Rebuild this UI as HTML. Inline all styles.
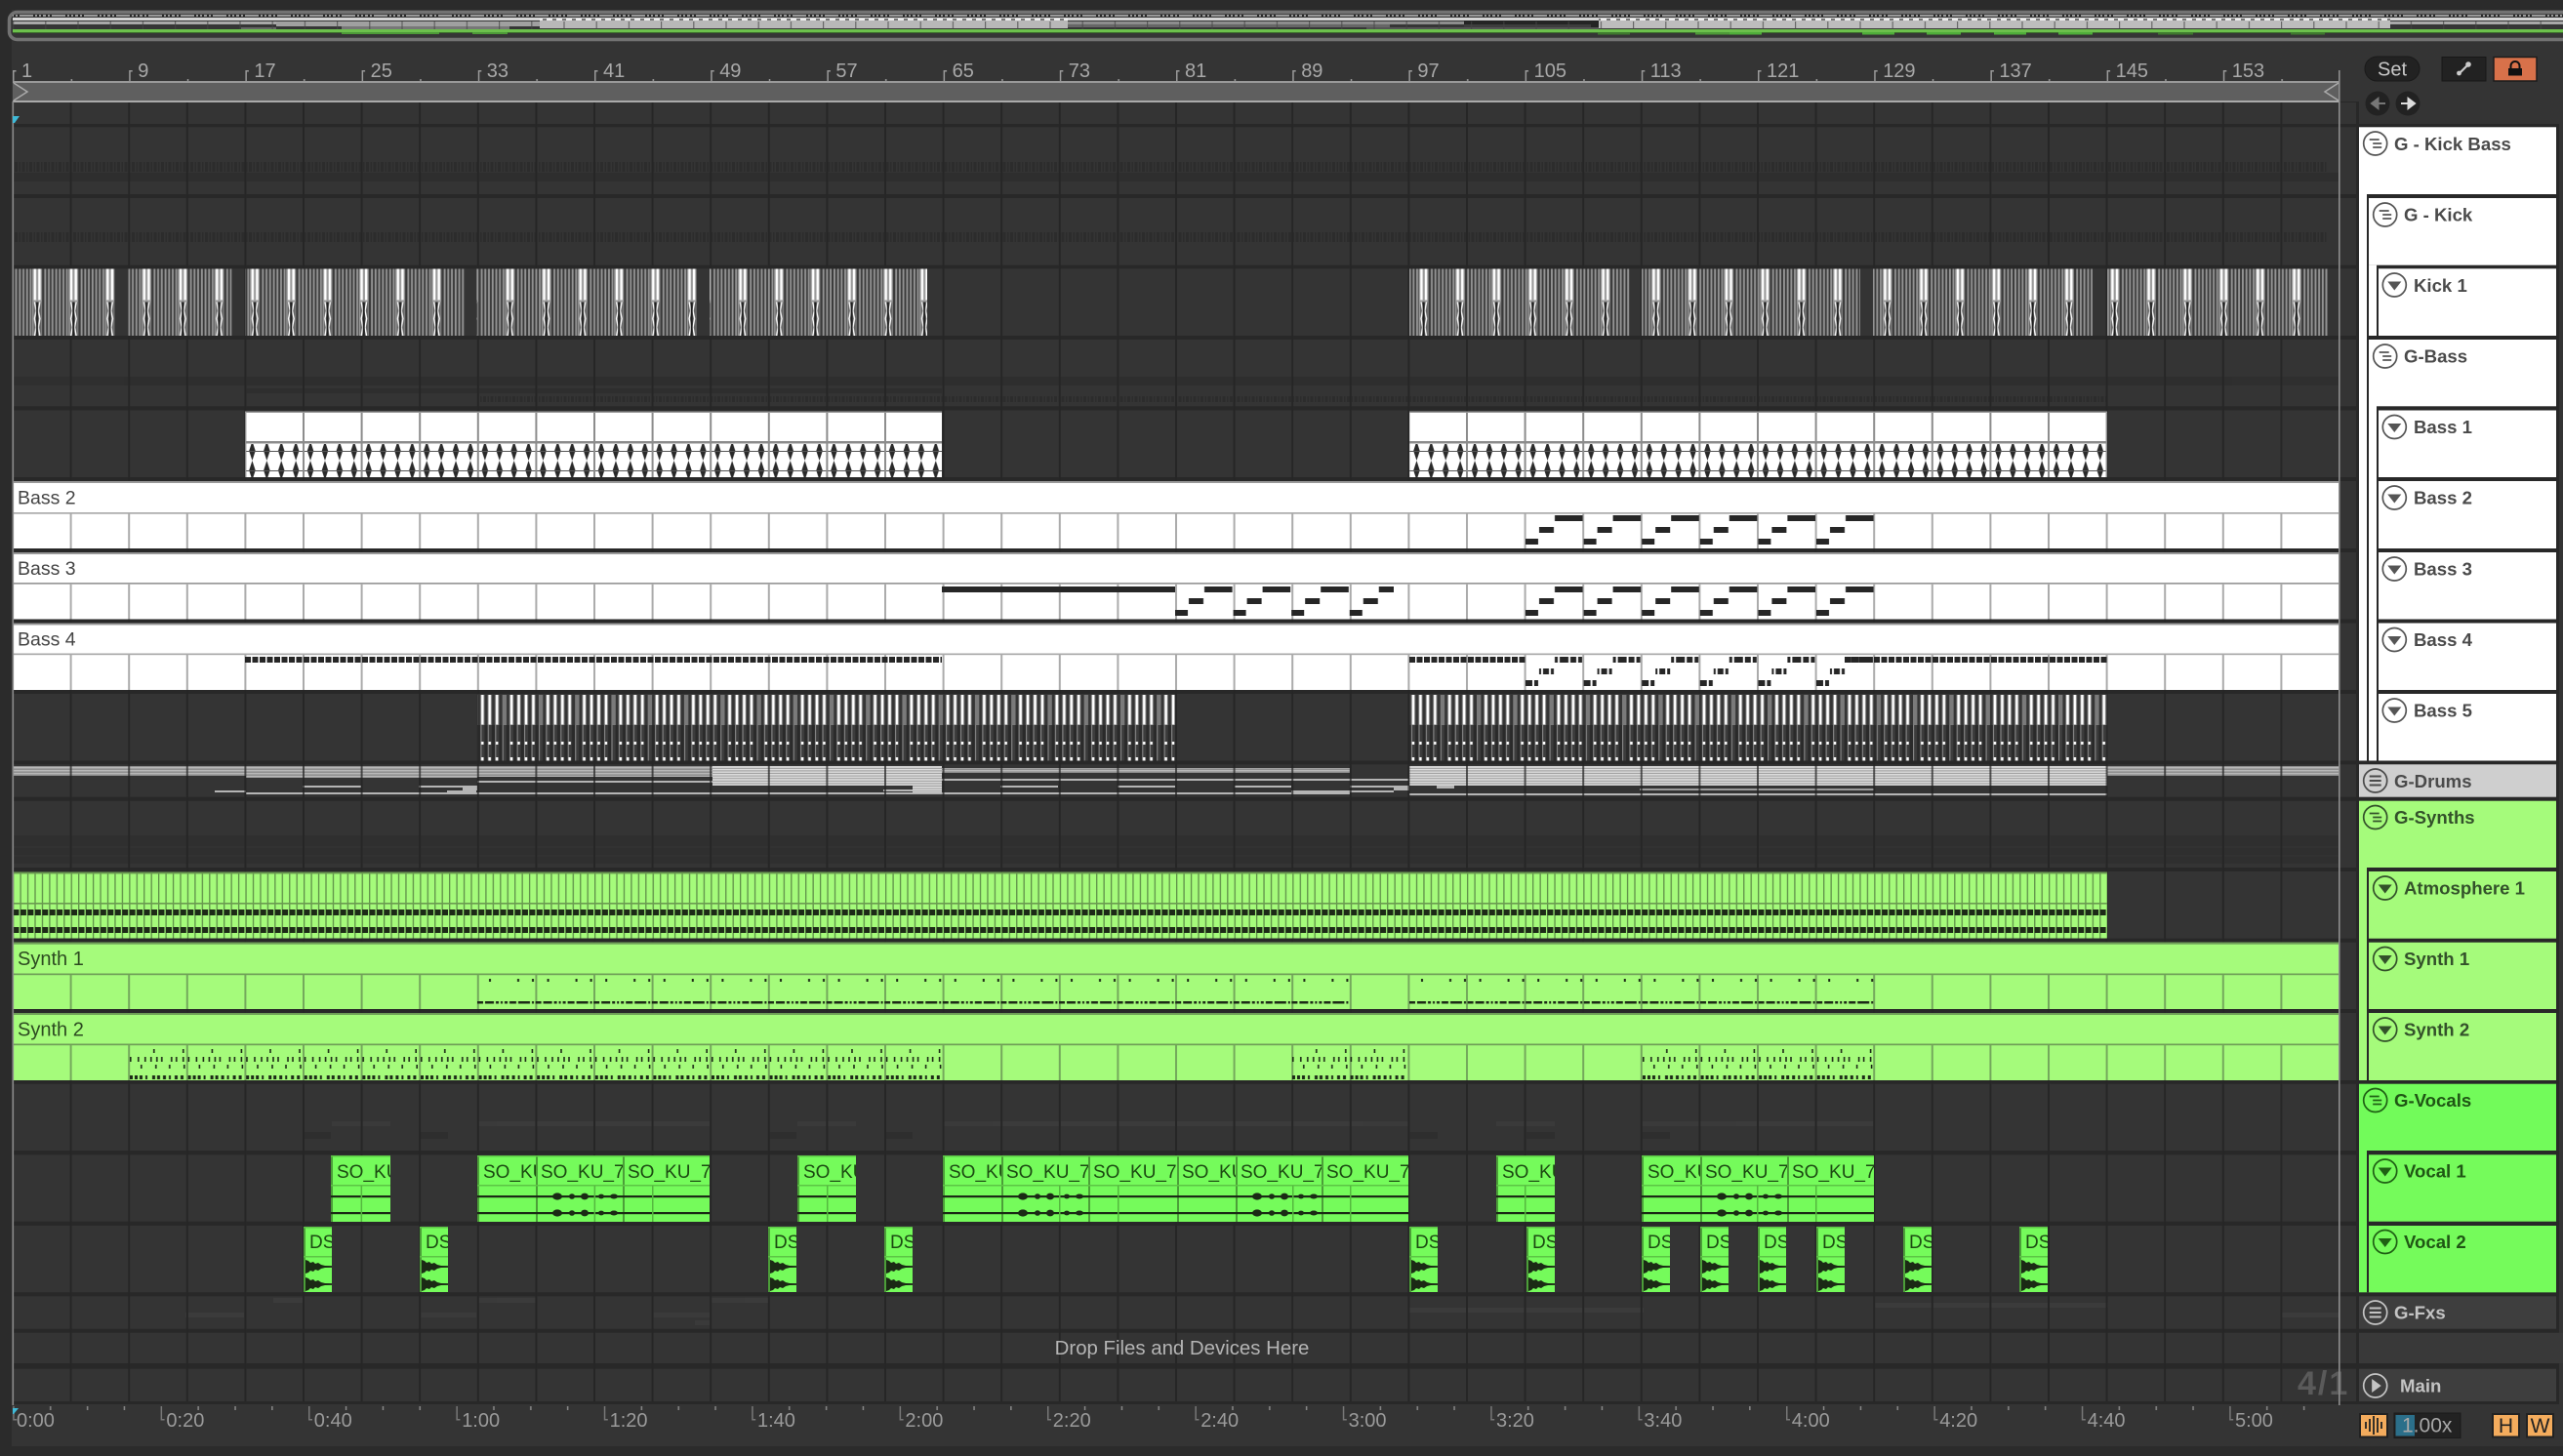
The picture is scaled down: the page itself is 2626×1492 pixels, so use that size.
<!DOCTYPE html>
<html lang="en"><head><meta charset="utf-8"><title>Arrangement</title>
<style>html,body{margin:0;padding:0;background:#333;width:2626px;height:1492px;overflow:hidden}svg{display:block}text{font-family:"Liberation Sans",sans-serif}</style></head>
<body>
<svg xmlns="http://www.w3.org/2000/svg" width="2626" height="1492" viewBox="0 0 2626 1492">
<defs>
<pattern id="gd" width="59.6" height="10" patternUnits="userSpaceOnUse" patternTransform="translate(12 0)"><rect width="2" height="10" fill="#262626"/></pattern>
<pattern id="gw" width="59.6" height="10" patternUnits="userSpaceOnUse" patternTransform="translate(12 0)"><rect width="2" height="10" fill="#ababab"/></pattern>
<pattern id="gm" width="59.6" height="10" patternUnits="userSpaceOnUse" patternTransform="translate(12 0)"><rect width="2" height="10" fill="#8c8c8c"/></pattern>
<pattern id="gg" width="59.6" height="10" patternUnits="userSpaceOnUse" patternTransform="translate(12 0)"><rect width="2" height="10" fill="#74a85c"/></pattern>
<pattern id="rt" width="119.2" height="90" patternUnits="userSpaceOnUse" patternTransform="translate(13 0)"><rect y="72" width="1.5" height="12" fill="#9a9a9a"/><rect y="72" width="3.5" height="1.5" fill="#9a9a9a"/><rect x="59.6" y="81" width="1.5" height="3" fill="#9a9a9a"/></pattern>
<pattern id="bt" width="151.4" height="1460" patternUnits="userSpaceOnUse" patternTransform="translate(13.2 0)"><rect y="1441" width="1.5" height="14" fill="#777"/><rect y="1454" width="4" height="1.5" fill="#777"/><rect x="37.8" y="1441" width="1.5" height="4" fill="#888"/><rect x="75.7" y="1441" width="1.5" height="4" fill="#888"/><rect x="113.5" y="1441" width="1.5" height="4" fill="#888"/></pattern>
<pattern id="kick" width="37.25" height="69" patternUnits="userSpaceOnUse">
<rect width="37.25" height="69" fill="#3a3a3a"/>
<rect x="0" width="1.9" height="69" fill="#939393"/><rect x="3.7" width="1.9" height="69" fill="#939393"/><rect x="7.4" width="1.9" height="69" fill="#939393"/><rect x="11" width="1.9" height="69" fill="#939393"/><rect x="26" width="1.9" height="69" fill="#939393"/><rect x="29.7" width="1.9" height="69" fill="#939393"/><rect x="33.4" width="1.9" height="69" fill="#939393"/>
<rect x="13.6" width="10" height="69" fill="#9a9a9a"/><rect x="15.2" width="2.4" height="32" fill="#fff"/><rect x="19.8" width="2.4" height="32" fill="#fff"/>
<rect x="15" y="34" width="8" height="35" fill="#666"/><path d="M16 34l1.6 9-1.6 8 1.6 9-1.6 9M21.5 34l-1.6 9 1.6 8-1.6 9 1.6 9" stroke="#fff" stroke-width="1.4" fill="none"/><path d="M18.6 34v35" stroke="#1e1e1e" stroke-width="2"/>
</pattern>
<pattern id="wave" width="14.9" height="34" patternUnits="userSpaceOnUse"><rect width="14.9" height="34" fill="#fff"/><path d="M7.45-3L10.7 7 7.45 17 4.2 7zM7.45 17L10.7 27 7.45 37 4.2 27z" fill="#2a2a2a"/><rect y="7" width="14.9" height="1" fill="#555"/><rect y="27" width="14.9" height="1" fill="#555"/></pattern>
<pattern id="b5" width="37.25" height="69" patternUnits="userSpaceOnUse">
<rect width="37.25" height="32" fill="#353535"/><rect y="32" width="37.25" height="37" fill="#2a2a2a"/>
<path d="M0 1h4.4v31H0zM7.2 1h4.5v31H7.2zM14.7 1h4.4v31h-4.4zM22.1 1h4.5v31h-4.5zM29.6 1h4.4v31h-4.4z" fill="#7a7a7a"/>
<path d="M8.2 1h2.5v30.5H8.2zM15.7 1h2.4v30.5h-2.4zM23.1 1h2.5v30.5h-2.5zM30.6 1h2.4v30.5h-2.4z" fill="#fff"/>
<path d="M0 32h1.3v37H0zM7.4 32h1.3v37H7.4zM14.9 32h1.3v37h-1.3zM22.3 32h1.3v37h-1.3zM29.8 32h1.3v37h-1.3z" fill="#858585"/>
<path d="M1.3 32h2.8v37H1.3zM8.7 32h2.8v37H8.7zM16.2 32h2.8v37h-2.8zM23.6 32h2.8v37h-2.8zM31.1 32h2.8v37h-2.8z" fill="#3c3c3c"/>
<path d="M8.2 49h2.5v3H8.2zM15.7 49h2.4v3h-2.4zM23.1 49h2.5v3h-2.5zM30.6 49h2.4v3h-2.4zM8.2 65h2.5v3.5H8.2zM15.7 65h2.4v3.5h-2.4zM23.1 65h2.5v3.5h-2.5zM30.6 65h2.4v3.5h-2.4z" fill="#fff"/>
</pattern>
<pattern id="atm" width="7.45" height="68" patternUnits="userSpaceOnUse"><rect width="7.45" height="68" fill="#a5fb7b"/><rect width="1.3" height="68" fill="#5f9049"/><rect x="0.5" y="38.5" width="6" height="6" fill="#1d2a17"/><rect x="0.5" y="56.5" width="6" height="6" fill="#1d2a17"/></pattern>
<pattern id="tri" width="59.6" height="30" patternUnits="userSpaceOnUse"><rect x="30" width="28.6" height="6" fill="#262626"/><rect x="14" y="12" width="15" height="6" fill="#262626"/><rect y="24" width="13" height="6" fill="#262626"/></pattern>
<pattern id="tri4" width="59.6" height="30" patternUnits="userSpaceOnUse"><path d="M30 0h3v6h-3zM35 0h9v6h-9zM46 0h6v6h-6zM54 0h4v6h-4zM14 12h2v6h-2zM18 12h6v6h-6zM26 12h3v6h-3zM0 24h7v6H0zM9 24h4v6H9z" fill="#262626"/></pattern>
<pattern id="dash" width="15" height="6" patternUnits="userSpaceOnUse"><rect width="6" height="6" fill="#262626"/><rect x="7.5" width="6" height="6" fill="#262626"/></pattern>
<pattern id="s1" width="59.6" height="26" patternUnits="userSpaceOnUse"><path d="M12 0h2v3h-2zM41 0h2v3h-2zM56 0h2v3h-2z" fill="#1c2a16"/><path d="M0 23h6v2.5H0zM8 23h9v2.5H8zM19 23h3v2.5h-3zM24 23h2v2.5h-2zM28 23h3v2.5h-3zM33 23h7v2.5h-7zM42 23h12v2.5H42zM56 23h2v2.5h-2z" fill="#1c2a16"/></pattern>
<pattern id="s2" width="59.6" height="32" patternUnits="userSpaceOnUse"><path d="M25 0h1.6v4H25zM55 0h1.6v4H55zM1 8h1.6v5H1zM9 8h1.6v5H9zM16 8h1.6v5H16zM22 8h1.6v5H22zM28 8h1.6v5H28zM33 8h1.6v5H33zM43 8h1.6v5H43zM48 8h1.6v5H48zM55 8h1.6v5H55zM12 16h1.6v4H12zM27 16h1.6v4H27zM41 16h1.6v4H41zM56 16h1.6v4H56z" fill="#1c2a16"/><path d="M1 27h3v4H1zM6 27h3v4H6zM11 27h3v4H11zM17 27h2v4h-2zM24 27h3v4h-3zM29 27h3v4h-3zM35 27h3v4h-3zM41 27h2v4h-2zM47 27h3v4h-3zM53 27h3v4h-3z" fill="#1c2a16"/></pattern>
<pattern id="st" width="10" height="3" patternUnits="userSpaceOnUse"><rect width="10" height="1.8" fill="#b8b8b8"/><rect y="1.8" width="10" height="1.2" fill="#8f8f8f"/></pattern>
<pattern id="stb" width="10" height="2.6" patternUnits="userSpaceOnUse"><rect width="10" height="1.7" fill="#dcdcdc"/><rect y="1.7" width="10" height=".9" fill="#9a9a9a"/></pattern>
<pattern id="faint" width="7.5" height="10" patternUnits="userSpaceOnUse"><rect width="3" height="10" fill="#2a2a2a"/><rect x="4.5" width="1.5" height="10" fill="#2a2a2a"/></pattern>
<pattern id="ovd" width="33" height="3" patternUnits="userSpaceOnUse"><path d="M1 0h2v2H1zM5 0h2v2H5zM9 0h2v2H9zM14 0h2v2h-2zM18 0h2v2h-2z" fill="#2a2a2a"/></pattern>
<pattern id="ovw" width="10" height="2" patternUnits="userSpaceOnUse"><rect width="6" height="2" fill="#eee"/><rect x="6" width="4" height="2" fill="#777"/></pattern>
<pattern id="ovt" width="33.2" height="8" patternUnits="userSpaceOnUse" patternTransform="translate(13 0)"><rect width="1.2" height="8" fill="#444" opacity=".7"/></pattern>

<g id="ig"><circle r="12" fill="none" stroke="currentColor" stroke-width="1.7"/><path d="M-6-4H4M-2.5 0H6.5M-2.5 4H6.5" stroke="currentColor" stroke-width="1.8" fill="none"/></g>
<g id="il"><circle r="12" fill="none" stroke="currentColor" stroke-width="1.7"/><path d="M-6-4.5H6M-6 0H6M-6 4.5H6" stroke="currentColor" stroke-width="2" fill="none"/></g>
<g id="it"><circle r="12" fill="none" stroke="currentColor" stroke-width="1.7"/><path d="M-7-3.5H7L0 5.5z" fill="currentColor"/></g>
<g id="ip"><circle r="12" fill="none" stroke="currentColor" stroke-width="1.7"/><path d="M-3.5-7L6 0-3.5 7z" fill="currentColor"/></g>

<g id="vc"><rect width="130" height="68" fill="#75fb5b"/><rect width="2" height="68" fill="#4c9e39"/><rect width="130" height="1.5" fill="#5cc545"/><rect y="30" width="130" height="1.5" fill="#5cc545"/><rect y="41" width="130" height="2.2" fill="#1b2a15"/><rect y="58" width="130" height="2.2" fill="#1b2a15"/></g>
<g id="vb"><use href="#vc"/><g fill="#1b2a15"><ellipse cx="22" cy="42" rx="5" ry="3.6"/><ellipse cx="37" cy="42" rx="3" ry="2.8"/><ellipse cx="50" cy="42" rx="4" ry="3.4"/><ellipse cx="67" cy="42" rx="3" ry="2.4"/><ellipse cx="80" cy="42" rx="4" ry="2.5"/><ellipse cx="22" cy="59" rx="5" ry="3.6"/><ellipse cx="37" cy="59" rx="3" ry="2.8"/><ellipse cx="50" cy="59" rx="4" ry="3.4"/><ellipse cx="67" cy="59" rx="3" ry="2.4"/><ellipse cx="80" cy="59" rx="4" ry="2.5"/></g></g>
<g id="ds"><rect width="40" height="67" fill="#75fb5b"/><rect width="2" height="67" fill="#4c9e39"/><rect width="40" height="1.5" fill="#5cc545"/><rect y="30" width="40" height="1.5" fill="#5cc545"/>
<path d="M2 34L5 35 7 37 10 36 12 38 15 37 18 39 22 40 30 40.2V41.8L22 42 18 43 15 45 12 44 10 46 7 45 5 47 2 48z" fill="#1b2a15"/><path d="M2 52L5 53 7 55 10 54 12 56 15 55 18 57 22 58 30 58.2V59.8L22 60 18 61 15 63 12 62 10 64 7 63 5 65 2 66z" fill="#1b2a15"/></g>
</defs>

<rect width="2626" height="1492" fill="#343434"/>
<rect width="2626" height="10" fill="#2b2b2b"/>
<rect y="0" width="12" height="1492" fill="#2b2b2b"/>
<rect y="1482" width="2626" height="10" fill="#2b2b2b"/>

<!-- overview -->
<rect x="9.5" y="12.5" width="2640" height="28" rx="8" fill="#353535" stroke="#727272" stroke-width="3.5"/>
<rect x="13" y="15" width="2613" height="2" fill="#999"/><rect x="13" y="15" width="2613" height="2" fill="url(#ovd)"/>
<rect x="13" y="18" width="2613" height="3" fill="#d4d4d4"/>
<rect x="13" y="22" width="270" height="3" fill="#a8a8a8"/><rect x="2449" y="22" width="177" height="3" fill="#a8a8a8"/>
<rect x="283" y="22" width="270" height="5" fill="#a0a0a0"/>
<rect x="553" y="19" width="541" height="2" fill="url(#ovw)"/><rect x="553" y="21" width="541" height="8" fill="#b8b8b8"/>
<rect x="1094" y="22" width="544" height="3" fill="#8d8d8d"/><rect x="1094" y="25" width="330" height="3" fill="#666"/>
<rect x="1500" y="21" width="138" height="8" fill="#242424"/><rect x="1500" y="25" width="130" height="3" fill="#3d3d3d"/>
<rect x="1638" y="19" width="811" height="2" fill="url(#ovw)"/><rect x="1638" y="21" width="811" height="8" fill="#bdbdbd"/>
<rect x="350" y="27" width="172" height="3" fill="#777"/><rect x="247" y="28" width="36" height="2" fill="#666"/>
<rect x="1400" y="28" width="238" height="2" fill="#555"/>
<rect x="13" y="22" width="2613" height="8" fill="url(#ovt)"/>
<rect x="13" y="30" width="2613" height="3" fill="#6cc04c"/><rect x="13" y="33" width="2613" height="1" fill="#3c6a2c"/>
<g fill="#4d9a38"><rect x="350" y="33" width="34" height="2"/><rect x="384" y="33" width="66" height="2"/><rect x="484" y="33" width="36" height="2"/><rect x="1637" y="33" width="33" height="2.5" fill="#3f7a2e"/><rect x="1737" y="33" width="68" height="2.5"/><rect x="1772" y="33" width="33" height="2.5" fill="#4fae3a"/><rect x="1908" y="33" width="33" height="2.5" fill="#4fae3a"/><rect x="1974" y="33" width="35" height="2.5" fill="#4fae3a"/><rect x="2043" y="33" width="33" height="2.5" fill="#4fae3a"/><rect x="2109" y="33" width="35" height="2.5" fill="#4fae3a"/><rect x="2211" y="33" width="36" height="2.5" fill="#3f7a2e"/><rect x="2347" y="33" width="35" height="2.5" fill="#3f7a2e"/></g>

<!-- ruler -->
<rect x="13" y="70" width="2384" height="14" fill="url(#rt)"/>
<g font-size="20" fill="#a8a8a8">
<text x="22" y="79">1</text><text x="141.2" y="79">9</text><text x="260.4" y="79">17</text><text x="379.6" y="79">25</text><text x="498.8" y="79">33</text><text x="618" y="79">41</text><text x="737.2" y="79">49</text><text x="856.4" y="79">57</text><text x="975.6" y="79">65</text><text x="1094.8" y="79">73</text><text x="1214" y="79">81</text><text x="1333.2" y="79">89</text><text x="1452.4" y="79">97</text><text x="1571.6" y="79">105</text><text x="1690.8" y="79">113</text><text x="1810" y="79">121</text><text x="1929.2" y="79">129</text><text x="2048.4" y="79">137</text><text x="2167.6" y="79">145</text><text x="2286.8" y="79">153</text>
</g>

<!-- arrangement bg -->
<rect x="13" y="104" width="2404" height="1335" fill="#282828"/>
<g fill="#343434">
<rect x="13" y="105" width="2401" height="22"/><rect x="13" y="130.3" width="2401" height="68.7"/><rect x="13" y="203" width="2401" height="68.7"/><rect x="13" y="275.3" width="2401" height="68.7"/><rect x="13" y="348" width="2401" height="68.3"/><rect x="13" y="420.5" width="2401" height="68.5"/><rect x="13" y="493" width="2401" height="69"/><rect x="13" y="566" width="2401" height="68.5"/><rect x="13" y="638.5" width="2401" height="68.5"/><rect x="13" y="711" width="2401" height="68.5"/><rect x="13" y="783.3" width="2401" height="33.4"/><rect x="13" y="820.7" width="2401" height="68.3"/><rect x="13" y="893" width="2401" height="68.7"/><rect x="13" y="965.7" width="2401" height="68.3"/><rect x="13" y="1038" width="2401" height="69"/><rect x="13" y="1110.7" width="2401" height="68.3"/><rect x="13" y="1183.3" width="2401" height="68.4"/><rect x="13" y="1256" width="2401" height="68.3"/><rect x="13" y="1328.3" width="2401" height="33.4"/><rect x="13" y="1365.7" width="2401" height="31.3"/><rect x="13" y="1402.7" width="2401" height="33.3"/>
</g>
<!-- faint group previews -->
<g opacity=".75">
<rect x="15" y="166" width="2370" height="10" fill="url(#faint)"/><rect x="13" y="177" width="2384" height="9" fill="#2d2d2d"/>
<rect x="15" y="238" width="2370" height="10" fill="url(#faint)"/>
<rect x="13" y="386" width="2384" height="9" fill="#2d2d2d"/><rect x="251" y="398" width="714" height="5" fill="#2c2c2c"/><rect x="489" y="406" width="1670" height="6" fill="url(#faint)"/>
<rect x="13" y="856" width="2384" height="29" fill="#2e2e2e"/><rect x="13" y="867" width="2384" height="2" fill="#323232"/><rect x="13" y="876" width="2384" height="2" fill="#323232"/>
<rect x="311" y="1160" width="28" height="7" fill="#2d2d2d"/><rect x="430" y="1160" width="29" height="7" fill="#2d2d2d"/><rect x="787" y="1160" width="29" height="7" fill="#2d2d2d"/><rect x="906" y="1160" width="29" height="7" fill="#2d2d2d"/><rect x="1444" y="1160" width="29" height="7" fill="#2d2d2d"/><rect x="1564" y="1160" width="29" height="7" fill="#2d2d2d"/><rect x="1682" y="1160" width="29" height="7" fill="#2d2d2d"/>
<rect x="340" y="1149" width="60" height="5" fill="#3d3d3d"/><rect x="489" y="1149" width="238" height="5" fill="#3d3d3d"/><rect x="817" y="1149" width="60" height="5" fill="#3d3d3d"/><rect x="966" y="1149" width="477" height="5" fill="#3d3d3d"/><rect x="1533" y="1149" width="60" height="5" fill="#3d3d3d"/><rect x="1682" y="1149" width="238" height="5" fill="#3d3d3d"/>
<rect x="280" y="1330" width="30" height="5" fill="#3d3d3d"/><rect x="490" y="1330" width="60" height="5" fill="#3d3d3d"/><rect x="728" y="1330" width="59" height="5" fill="#3d3d3d"/><rect x="430" y="1345" width="58" height="5" fill="#3d3d3d"/><rect x="668" y="1345" width="60" height="5" fill="#3d3d3d"/><rect x="712" y="1353" width="16" height="5" fill="#3d3d3d"/><rect x="190" y="1345" width="60" height="5" fill="#3d3d3d"/><rect x="2337" y="1345" width="60" height="5" fill="#3d3d3d"/><rect x="1444" y="1340" width="240" height="5" fill="#3d3d3d"/><rect x="1920" y="1335" width="240" height="5" fill="#3d3d3d"/>
</g>
<rect x="14" y="105" width="2383" height="1331" fill="url(#gd)"/>

<!-- loop bar -->
<rect x="13" y="84" width="2384" height="20" fill="#5f5f5f"/><rect x="13" y="83" width="2384" height="2" fill="#999"/><rect x="13" y="103" width="2384" height="2" fill="#aaa"/>
<path d="M14 85L28 94 14 103" fill="none" stroke="#aaa" stroke-width="1.5"/><path d="M2396 85L2382 94 2396 103" fill="none" stroke="#aaa" stroke-width="1.5"/>

<!-- Kick 1 -->
<rect transform="translate(19.4 275.5)" x="-6" width="104" height="68.5" fill="url(#kick)"/>
<rect transform="translate(131.4 275.5)" x="0" width="106" height="68.5" fill="url(#kick)"/>
<rect transform="translate(242.4 275.5)" x="9" width="225" height="68.5" fill="url(#kick)"/>
<rect transform="translate(466.6 275.5)" x="22" width="225" height="68.5" fill="url(#kick)"/>
<rect transform="translate(705 275.5)" x="22" width="223" height="68.5" fill="url(#kick)"/>
<rect transform="translate(1440 275.5)" x="4" width="226" height="68.5" fill="url(#kick)"/>
<rect transform="translate(1678 275.5)" x="4" width="224" height="68.5" fill="url(#kick)"/>
<rect transform="translate(1915 275.5)" x="4" width="225" height="68.5" fill="url(#kick)"/>
<rect transform="translate(2148 275.5)" x="11" width="226" height="68.5" fill="url(#kick)"/>

<!-- Bass 1 clips -->
<rect x="251" y="421.5" width="714" height="67.5" fill="#fff"/><rect x="1444" y="421.5" width="715" height="67.5" fill="#fff"/>
<rect transform="translate(251 455)" width="714" height="34" fill="url(#wave)"/><rect transform="translate(1444 455)" width="715" height="34" fill="url(#wave)"/>
<rect x="251" y="421.5" width="714" height="67.5" fill="url(#gm)"/><rect x="1444" y="421.5" width="715" height="67.5" fill="url(#gm)"/>
<rect x="251" y="421.5" width="714" height="1.5" fill="#999"/><rect x="1444" y="421.5" width="715" height="1.5" fill="#999"/>
<rect x="251" y="452" width="714" height="2.5" fill="#8c8c8c"/><rect x="1444" y="452" width="715" height="2.5" fill="#8c8c8c"/>

<!-- Bass 2-4 -->
<g>
<rect x="13" y="493" width="2384" height="69" fill="#fff"/><rect x="13" y="493" width="2384" height="2" fill="#999"/><rect x="13" y="525" width="2384" height="1.7" fill="#aaa"/><rect x="14" y="526" width="2383" height="36" fill="url(#gw)"/>
<rect x="13" y="566" width="2384" height="68.5" fill="#fff"/><rect x="13" y="566" width="2384" height="2" fill="#999"/><rect x="13" y="597" width="2384" height="1.7" fill="#999"/><rect x="14" y="598" width="2383" height="36.5" fill="url(#gw)"/>
<rect x="13" y="638.5" width="2384" height="68.5" fill="#fff"/><rect x="13" y="638.5" width="2384" height="2" fill="#999"/><rect x="13" y="669.5" width="2384" height="1.7" fill="#aaa"/><rect x="14" y="671" width="2383" height="36" fill="url(#gw)"/>
</g>
<text x="18" y="516.5" font-size="19.5" fill="#444">Bass 2</text>
<text x="18" y="589" font-size="19.5" fill="#444">Bass 3</text>
<text x="18" y="661.5" font-size="19.5" fill="#444">Bass 4</text>
<rect transform="translate(1563 528)" width="357" height="30" fill="url(#tri)"/>
<rect transform="translate(1563 601)" width="357" height="30" fill="url(#tri)"/>
<rect x="965" y="601" width="239" height="6" fill="#262626"/><rect transform="translate(1204 601)" width="224" height="30" fill="url(#tri)"/>
<rect transform="translate(251 673)" width="714" height="6" fill="url(#dash)"/>
<rect transform="translate(1444 673)" width="119" height="6" fill="url(#dash)"/>
<rect transform="translate(1890 673)" width="269" height="6" fill="url(#dash)"/>
<rect transform="translate(1563 673)" width="357" height="30" fill="url(#tri4)"/>

<!-- Bass 5 -->
<rect transform="translate(477.4 711)" x="11.6" width="715" height="68.5" fill="url(#b5)"/>
<rect transform="translate(1438.5 711)" x="5.5" width="715" height="68.5" fill="url(#b5)"/>

<!-- G-Drums -->
<rect x="13" y="785" width="239" height="10" fill="url(#st)"/>
<rect x="252" y="785" width="237" height="12" fill="url(#st)"/>
<rect x="489" y="785" width="241" height="11" fill="url(#st)"/>
<rect x="730" y="785" width="235" height="20" fill="url(#stb)"/>
<rect x="935" y="805" width="30" height="7" fill="url(#stb)"/>
<rect x="965" y="787" width="418" height="5" fill="url(#st)"/>
<rect x="1444" y="785" width="715" height="20" fill="url(#stb)"/>
<rect x="2159" y="785" width="238" height="10" fill="url(#st)"/>
<g fill="#b5b5b5">
<rect x="220" y="810" width="32" height="2"/><rect x="252" y="812" width="237" height="2"/><rect x="310" y="805" width="60" height="2"/><rect x="429" y="805" width="60" height="2"/><rect x="458" y="810" width="30" height="2"/><rect x="474" y="807" width="15" height="3"/>
<rect x="489" y="800" width="241" height="2"/><rect x="489" y="812" width="476" height="2"/><rect x="905" y="809" width="30" height="2"/>
<rect x="965" y="798" width="478" height="2"/><rect x="965" y="812" width="358" height="2"/><rect x="1025" y="805" width="59" height="2"/><rect x="1145" y="805" width="59" height="2"/><rect x="1265" y="805" width="58" height="2"/><rect x="1323" y="810" width="60" height="4"/><rect x="1383" y="805" width="61" height="2"/><rect x="1383" y="810" width="45" height="2"/><rect x="1428" y="807" width="16" height="3"/>
<rect x="1444" y="813" width="715" height="2"/><rect x="1472" y="805" width="18" height="3"/><rect x="1680" y="808" width="240" height="2" opacity=".8"/>
</g>
<rect x="14" y="785" width="2383" height="30" fill="url(#gd)" opacity=".75"/>

<!-- Atmosphere -->
<rect transform="translate(13 893.5)" width="2146" height="68" fill="url(#atm)"/>
<rect x="13" y="893.5" width="2146" height="2" fill="#6a9a50"/><rect x="13" y="925" width="2146" height="1.6" fill="#6a9a50"/>

<!-- Synth 1/2 -->
<rect x="13" y="965.7" width="2384" height="68.3" fill="#a5fb7b"/><rect x="13" y="965.7" width="2384" height="2" fill="#6f9f57"/><rect x="13" y="997.5" width="2384" height="1.7" fill="#6f9f57"/><rect x="14" y="999" width="2383" height="35" fill="url(#gg)"/>
<rect x="13" y="1038" width="2384" height="69" fill="#a5fb7b"/><rect x="13" y="1038" width="2384" height="2" fill="#6f9f57"/><rect x="13" y="1069.5" width="2384" height="1.7" fill="#6f9f57"/><rect x="14" y="1071" width="2383" height="36" fill="url(#gg)"/>
<text x="18" y="989" font-size="20" fill="#2c4a20">Synth 1</text>
<text x="18" y="1061.5" font-size="20" fill="#2c4a20">Synth 2</text>
<rect transform="translate(489 1003)" width="894" height="26" fill="url(#s1)"/>
<rect transform="translate(1444 1003)" width="476" height="26" fill="url(#s1)"/>
<rect transform="translate(132 1075)" width="833" height="32" fill="url(#s2)"/>
<rect transform="translate(1323 1075)" width="120" height="32" fill="url(#s2)"/>
<rect transform="translate(1682 1075)" width="238" height="32" fill="url(#s2)"/>

<!-- Vocal 1 clips -->
<svg x="339" y="1184" width="61" height="68"><use href="#vc"/><text x="6" y="23" font-size="19" fill="#1c4a12">SO_KU_7</text></svg>
<svg x="489" y="1184" width="60" height="68"><use href="#vc"/><text x="6" y="23" font-size="19" fill="#1c4a12">SO_KU_7</text></svg>
<svg x="549" y="1184" width="89" height="68"><use href="#vb"/><text x="5" y="23" font-size="19" fill="#1c4a12">SO_KU_7</text></svg>
<svg x="638" y="1184" width="89" height="68"><use href="#vc"/><text x="5" y="23" font-size="19" fill="#1c4a12">SO_KU_7</text></svg>
<svg x="817" y="1184" width="60" height="68"><use href="#vc"/><text x="6" y="23" font-size="19" fill="#1c4a12">SO_KU_7</text></svg>
<svg x="966" y="1184" width="60" height="68"><use href="#vc"/><text x="6" y="23" font-size="19" fill="#1c4a12">SO_KU_7</text></svg>
<svg x="1026" y="1184" width="89" height="68"><use href="#vb"/><text x="5" y="23" font-size="19" fill="#1c4a12">SO_KU_7</text></svg>
<svg x="1115" y="1184" width="91" height="68"><use href="#vc"/><text x="5" y="23" font-size="19" fill="#1c4a12">SO_KU_7</text></svg>
<svg x="1206" y="1184" width="60" height="68"><use href="#vc"/><text x="5" y="23" font-size="19" fill="#1c4a12">SO_KU_7</text></svg>
<svg x="1266" y="1184" width="88" height="68"><use href="#vb"/><text x="5" y="23" font-size="19" fill="#1c4a12">SO_KU_7</text></svg>
<svg x="1354" y="1184" width="89" height="68"><use href="#vc"/><text x="5" y="23" font-size="19" fill="#1c4a12">SO_KU_7</text></svg>
<svg x="1533" y="1184" width="60" height="68"><use href="#vc"/><text x="6" y="23" font-size="19" fill="#1c4a12">SO_KU_7</text></svg>
<svg x="1682" y="1184" width="60" height="68"><use href="#vc"/><text x="6" y="23" font-size="19" fill="#1c4a12">SO_KU_7</text></svg>
<svg x="1742" y="1184" width="89" height="68"><use href="#vb"/><text x="5" y="23" font-size="19" fill="#1c4a12">SO_KU_7</text></svg>
<svg x="1831" y="1184" width="89" height="68"><use href="#vc"/><text x="5" y="23" font-size="19" fill="#1c4a12">SO_KU_7</text></svg>
<g fill="#55b83f"><rect x="369.6" y="1215" width="1.5" height="37"/><rect x="608.6" y="1215" width="1.5" height="37"/><rect x="668" y="1215" width="1.5" height="37"/><rect x="847" y="1215" width="1.5" height="37"/><rect x="1085" y="1215" width="1.5" height="37"/><rect x="1145" y="1215" width="1.5" height="37"/><rect x="1324" y="1215" width="1.5" height="37"/><rect x="1383" y="1215" width="1.5" height="37"/><rect x="1562" y="1215" width="1.5" height="37"/><rect x="1800" y="1215" width="1.5" height="37"/><rect x="1860" y="1215" width="1.5" height="37"/></g>

<!-- Vocal 2 clips -->
<svg x="311" y="1257" width="29" height="67"><use href="#ds"/><text x="6" y="22" font-size="19" fill="#1c4a12">DS</text></svg>
<svg x="430" y="1257" width="29" height="67"><use href="#ds"/><text x="6" y="22" font-size="19" fill="#1c4a12">DS</text></svg>
<svg x="787" y="1257" width="29" height="67"><use href="#ds"/><text x="6" y="22" font-size="19" fill="#1c4a12">DS</text></svg>
<svg x="906" y="1257" width="29" height="67"><use href="#ds"/><text x="6" y="22" font-size="19" fill="#1c4a12">DS</text></svg>
<svg x="1444" y="1257" width="29" height="67"><use href="#ds"/><text x="6" y="22" font-size="19" fill="#1c4a12">DS</text></svg>
<svg x="1564" y="1257" width="29" height="67"><use href="#ds"/><text x="6" y="22" font-size="19" fill="#1c4a12">DS</text></svg>
<svg x="1682" y="1257" width="29" height="67"><use href="#ds"/><text x="6" y="22" font-size="19" fill="#1c4a12">DS</text></svg>
<svg x="1742" y="1257" width="29" height="67"><use href="#ds"/><text x="6" y="22" font-size="19" fill="#1c4a12">DS</text></svg>
<svg x="1801" y="1257" width="29" height="67"><use href="#ds"/><text x="6" y="22" font-size="19" fill="#1c4a12">DS</text></svg>
<svg x="1861" y="1257" width="29" height="67"><use href="#ds"/><text x="6" y="22" font-size="19" fill="#1c4a12">DS</text></svg>
<svg x="1950" y="1257" width="29" height="67"><use href="#ds"/><text x="6" y="22" font-size="19" fill="#1c4a12">DS</text></svg>
<svg x="2069" y="1257" width="29" height="67"><use href="#ds"/><text x="6" y="22" font-size="19" fill="#1c4a12">DS</text></svg>

<text x="1211" y="1388" font-size="20.4" fill="#b4b4b4" text-anchor="middle">Drop Files and Devices Here</text>

<!-- bottom ruler -->
<rect x="0" y="1439" width="2417" height="43" fill="#343434"/><rect y="1439" width="12" height="43" fill="#2b2b2b"/>
<rect x="13" y="1440" width="2384" height="20" fill="url(#bt)"/>
<g font-size="20" fill="#9a9a9a">
<text x="17" y="1462">0:00</text><text x="170.4" y="1462">0:20</text><text x="321.8" y="1462">0:40</text><text x="473.2" y="1462">1:00</text><text x="624.6" y="1462">1:20</text><text x="776" y="1462">1:40</text><text x="927.4" y="1462">2:00</text><text x="1078.8" y="1462">2:20</text><text x="1230.2" y="1462">2:40</text><text x="1381.6" y="1462">3:00</text><text x="1533" y="1462">3:20</text><text x="1684.4" y="1462">3:40</text><text x="1835.8" y="1462">4:00</text><text x="1987.2" y="1462">4:20</text><text x="2138.6" y="1462">4:40</text><text x="2290" y="1462">5:00</text>
</g>

<text x="2354" y="1429" font-size="34" font-weight="bold" letter-spacing="2" fill="#5a5a5a">4/1</text>
<rect x="12.5" y="104" width="1.6" height="1336" fill="#8a8a8a"/><rect x="2396" y="72" width="1.6" height="1368" fill="#8e8e8e"/>
<path d="M13 119H20L15 126H13z" fill="#3fbad8"/>
<path d="M13 1443H19L14 1449H13z" fill="#3fbad8"/>

<!-- right panel -->
<rect x="2414" y="127" width="212" height="1312" fill="#282828"/>
<rect x="2622" y="127" width="4" height="1312" fill="#343434"/>

<!-- white group -->
<rect x="2417" y="130.3" width="202" height="649.2" fill="#fff"/>
<rect x="2425" y="199" width="194" height="580.5" fill="#282828"/>
<rect x="2427" y="203" width="192" height="68.7" fill="#fff"/>
<rect x="2427" y="271.7" width="8" height="72.3" fill="#fff"/>
<rect x="2437" y="275.3" width="182" height="68.7" fill="#fff"/>
<rect x="2427" y="348" width="192" height="431.5" fill="#fff"/>
<rect x="2435" y="416.3" width="184" height="363.2" fill="#282828"/>
<rect x="2437" y="420.5" width="182" height="68.5" fill="#fff"/>
<rect x="2437" y="493" width="182" height="69" fill="#fff"/>
<rect x="2437" y="566" width="182" height="68.5" fill="#fff"/>
<rect x="2437" y="638.5" width="182" height="68.5" fill="#fff"/>
<rect x="2437" y="711" width="182" height="68.5" fill="#fff"/>

<rect x="2417" y="783.3" width="202" height="33.4" fill="#cfcfcf"/>

<!-- synth group -->
<rect x="2417" y="820.7" width="202" height="286.3" fill="#a5fb7b"/>
<rect x="2425" y="889" width="194" height="218" fill="#282828"/>
<rect x="2427" y="893" width="192" height="68.7" fill="#a5fb7b"/>
<rect x="2427" y="965.7" width="192" height="68.3" fill="#a5fb7b"/>
<rect x="2427" y="1038" width="192" height="69" fill="#a5fb7b"/>

<!-- vocal group -->
<rect x="2417" y="1110.7" width="202" height="213.6" fill="#72fb5a"/>
<rect x="2425" y="1179" width="194" height="145.3" fill="#282828"/>
<rect x="2427" y="1183.3" width="192" height="68.4" fill="#75fb5b"/>
<rect x="2427" y="1256" width="192" height="68.3" fill="#75fb5b"/>

<rect x="2417" y="1328.3" width="202" height="33.4" fill="#3e3e3e"/>
<rect x="2417" y="1365.7" width="209" height="31.3" fill="#393939"/>
<rect x="2417" y="1402.7" width="202" height="33.3" fill="#3e3e3e"/>

<g style="color:#555"><use href="#ig" x="2433.7" y="147"/><use href="#ig" x="2443.7" y="220"/><use href="#it" x="2453.3" y="292"/><use href="#ig" x="2443.7" y="365"/><use href="#it" x="2453.3" y="437.5"/><use href="#it" x="2453.3" y="510"/><use href="#it" x="2453.3" y="583"/><use href="#it" x="2453.3" y="655.5"/><use href="#it" x="2453.3" y="728"/></g>
<g style="color:#4a4a4a"><use href="#il" x="2433.7" y="800"/></g>
<g style="color:#33512a"><use href="#ig" x="2433.7" y="837.5"/><use href="#it" x="2443.7" y="910"/><use href="#it" x="2443.7" y="982.5"/><use href="#it" x="2443.7" y="1055"/></g>
<g style="color:#1f6014"><use href="#ig" x="2433.7" y="1127.5"/><use href="#it" x="2443.7" y="1200"/><use href="#it" x="2443.7" y="1272.5"/></g>
<g style="color:#c4c4c4"><use href="#il" x="2433.7" y="1345"/><use href="#ip" x="2433.7" y="1420"/></g>

<g font-size="18.6" font-weight="bold">
<g fill="#4a4a4a">
<text x="2453" y="154">G - Kick Bass</text><text x="2463" y="226.5">G - Kick</text><text x="2473" y="299">Kick 1</text><text x="2463" y="371.5">G-Bass</text><text x="2473" y="444">Bass 1</text><text x="2473" y="516.5">Bass 2</text><text x="2473" y="589.5">Bass 3</text><text x="2473" y="662">Bass 4</text><text x="2473" y="734.5">Bass 5</text><text x="2453" y="807">G-Drums</text>
</g>
<g fill="#33512a">
<text x="2453" y="844">G-Synths</text><text x="2463" y="916.5">Atmosphere 1</text><text x="2463" y="989">Synth 1</text><text x="2463" y="1061.5">Synth 2</text>
</g>
<g fill="#1f5614">
<text x="2453" y="1134">G-Vocals</text><text x="2463" y="1206.5">Vocal 1</text><text x="2463" y="1279">Vocal 2</text>
</g>
<g fill="#c4c4c4"><text x="2453" y="1351.5">G-Fxs</text><text x="2459" y="1426.5">Main</text></g>
</g>

<!-- top right controls -->
<rect x="2423" y="58" width="56" height="25" rx="12.5" fill="#222" stroke="#1a1a1a"/>
<text x="2451" y="77.5" font-size="20" fill="#c8c8c8" text-anchor="middle">Set</text>
<rect x="2502" y="58.5" width="45" height="24.5" fill="#222" stroke="#171717"/>
<path d="M2520 75L2529 66" stroke="#ccc" stroke-width="2.2"/><circle cx="2519.5" cy="75" r="2.4" fill="#ccc"/><circle cx="2529" cy="66" r="2.8" fill="#ccc"/>
<rect x="2555" y="58.5" width="44" height="24.5" fill="#d8714a" stroke="#1c1c1c" stroke-width="1.5"/>
<rect x="2570" y="70" width="14" height="7.5" fill="#111"/><path d="M2572.5 70v-2.5a4.5 4.5 0 0 1 9 0V70" fill="none" stroke="#111" stroke-width="2"/>
<circle cx="2436" cy="106" r="12.5" fill="#222"/><path d="M2444 106H2433M2436.5 101L2430 106 2436.5 111z" stroke="#777" stroke-width="2" fill="#777"/>
<circle cx="2467" cy="106" r="12.5" fill="#222"/><path d="M2460 106H2471M2467.5 101L2474 106 2467.5 111z" stroke="#ddd" stroke-width="2" fill="#ddd"/>

<!-- bottom right controls -->
<rect x="2417" y="1448" width="30" height="25.5" fill="#222"/><rect x="2419" y="1450" width="26" height="21.5" fill="#f4ac5d"/>
<path d="M2424 1457v7M2428 1454v13M2432 1451v19M2436 1453v15M2440 1457v7" stroke="#222" stroke-width="1.8"/>
<rect x="2453" y="1448" width="68" height="25.5" fill="#222" stroke="#1a1a1a"/><rect x="2454.5" y="1450" width="19.5" height="21.5" fill="#2b6f8a"/>
<text x="2461" y="1467.5" font-size="21" fill="#a8a8a8">1.00x</text>
<rect x="2553" y="1448" width="29" height="25.5" fill="#222"/><rect x="2555" y="1450" width="25" height="21.5" fill="#f4ac5d"/><text x="2567.5" y="1468" font-size="21" fill="#222" text-anchor="middle">H</text>
<rect x="2588" y="1448" width="29" height="25.5" fill="#222"/><rect x="2590" y="1450" width="25" height="21.5" fill="#f4ac5d"/><text x="2602.5" y="1468" font-size="21" fill="#222" text-anchor="middle">W</text>
</svg>
</body></html>
